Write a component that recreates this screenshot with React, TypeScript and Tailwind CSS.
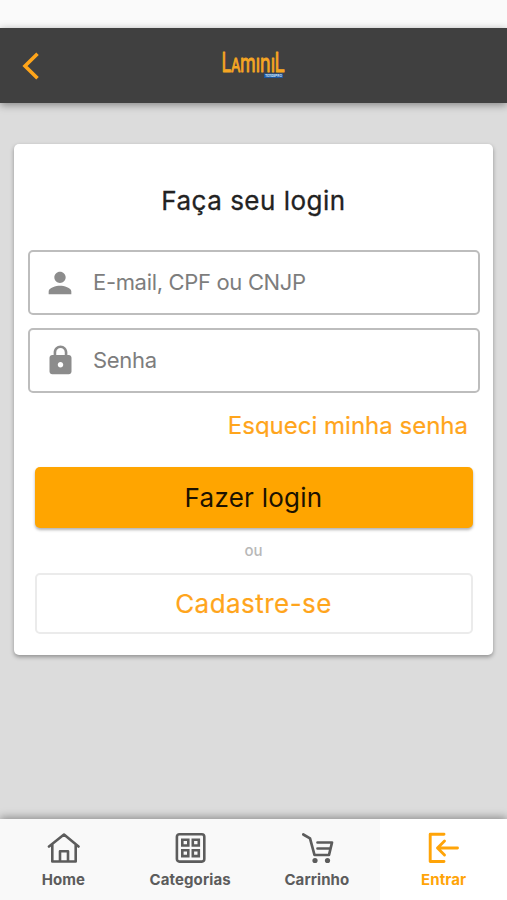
import React from "react";

function UserIcon() {
  return (
    <svg className="size-[34px] shrink-0" viewBox="0 0 24 24" fill="#8c8c8c">
      <path d="M12 12c2.21 0 4-1.79 4-4s-1.79-4-4-4-4 1.79-4 4 1.79 4 4 4zm0 2c-2.67 0-8 1.34-8 4v2h16v-2c0-2.66-5.33-4-8-4z" />
    </svg>
  );
}

function LockIcon() {
  return (
    <svg className="size-[33px] shrink-0" viewBox="0 0 24 24" fill="#8c8c8c">
      <path d="M18 8h-1V6c0-2.76-2.24-5-5-5S7 3.24 7 6v2H6c-1.1 0-2 .9-2 2v10c0 1.1.9 2 2 2h12c1.1 0 2-.9 2-2V10c0-1.1-.9-2-2-2zm-6 9c-1.1 0-2-.9-2-2s.9-2 2-2 2 .9 2 2-.9 2-2 2zM15.1 8H8.900V6c0-1.710 1.390-3.100 3.100-3.100s3.100 1.390 3.100 3.100v2z" />
    </svg>
  );
}

function Field({ icon, label }: { icon: React.ReactNode; label: string }) {
  return (
    <label className="flex h-[65px] items-center rounded-[5px] border-2 border-[#bdbdbd] bg-white pl-[13px]">
      <span className="flex w-[34px] justify-center">{icon}</span>
      <span className="mb-[2px] ml-[16px] text-[22px] leading-[28px] tracking-[-0.330px] text-[#7d7d7d]">{label}</span>
    </label>
  );
}

function Logo() {
  return (
    <svg className="h-[44px] w-[66px]" viewBox="-1 -6 66 44" fill="#f5a623" stroke="#f5a623" strokeWidth="0.900" strokeLinejoin="round" fontFamily="Inter, sans-serif" fontWeight="400">
      <text x="-0.500" y="21.500" fontSize="27.500" textLength="10" lengthAdjust="spacingAndGlyphs">L</text>
      <text x="9" y="21.500" fontSize="19" textLength="9.500" lengthAdjust="spacingAndGlyphs">A</text>
      <text x="18" y="21.500" fontSize="25" textLength="35" lengthAdjust="spacingAndGlyphs">mını</text>
      <text x="52.500" y="21.500" fontSize="27.500" textLength="10.500" lengthAdjust="spacingAndGlyphs">L</text>
      <rect x="42" y="23.500" width="19" height="4.500" fill="#1c559f" stroke="none" />
      <text x="43" y="27.200" fontSize="4" fontWeight="600" fill="#dce9fa" stroke="none" textLength="17" lengthAdjust="spacingAndGlyphs">TendaPRO</text>
    </svg>
  );
}

const stroke = { fill: "none", stroke: "currentColor", strokeLinecap: "round", strokeLinejoin: "round" } as const;

function HomeIcon() {
  return (
    <svg className="h-[32px] w-[34px]" viewBox="0 0 34 32" {...stroke} strokeWidth="2.600">
      <path d="M3 14.500 18 2.500 32.500 14.500M6.300 12.500V29.500H29.700V12.500M14 29V19.200H22V29" />
    </svg>
  );
}

function GridIcon() {
  return (
    <svg className="h-[32px] w-[34px]" viewBox="0 0 34 32" {...stroke} strokeWidth="2.600">
      <rect x="3.900" y="2.200" width="27.400" height="27.400" rx="2.500" />
      <path d="M9.300 7.800h6v5.700h-6zM19.800 7.800h6v5.700h-6zM9.300 18.200h6v5.900h-6zM19.800 18.200h6v5.900h-6z" strokeLinejoin="miter" />
    </svg>
  );
}

function CartIcon() {
  return (
    <svg className="h-[32px] w-[34px]" viewBox="0 0 34 32" {...stroke} strokeWidth="2.700">
      <path d="M3.300 2.500 10 6.300 14.500 23H29L32 10.500H17.500M17.500 16.500H29.500" />
      <circle cx="15" cy="28.500" r="2.600" fill="currentColor" stroke="none" />
      <circle cx="27.500" cy="28.500" r="2.600" fill="currentColor" stroke="none" />
    </svg>
  );
}

function EnterIcon() {
  return (
    <svg className="h-[32px] w-[34px]" viewBox="0 0 34 32" {...stroke} strokeWidth="2.900">
      <path d="M17 2.300H3.200V29.500H17M30.500 16H11M17.500 9 10.500 16 17.500 23" />
    </svg>
  );
}

function Tab({ label, icon, active = false }: { label: string; icon: React.ReactNode; active?: boolean }) {
  return (
    <button className={`flex flex-1 flex-col items-center pt-[13px] ${active ? "bg-white text-[#ffa408]" : "text-[#5c5c5c]"}`}>
      {icon}
      <span className="mt-[6px] text-[15px] leading-[20px] font-bold tracking-[0.1px]">{label}</span>
    </button>
  );
}

export default function App() {
  return (
    <div className="flex h-[900px] w-[507px] flex-col overflow-hidden bg-[#dcdcdc] font-['Inter',sans-serif]">
      <div className="h-[28px] shrink-0 bg-[#fafafa]" />
      <header className="grid h-[75px] shrink-0 grid-cols-3 items-center bg-[#404040] shadow-[0_2px_8px_rgba(0,0,0,0.4)]">
        <button className="pl-[21px]" aria-label="Voltar">
          <svg className="h-[30px] w-[20px]" viewBox="0 0 20 30" fill="none" stroke="#ffa51a" strokeWidth="3.600">
            <path d="M16.500 2.700 4 15 16.500 27.300" />
          </svg>
        </button>
        <div className="flex justify-center">
          <Logo />
        </div>
      </header>

      <main className="flex-1 px-[14px] pt-[41px]">
        <section className="flex h-[511px] flex-col rounded-[5px] bg-white px-[14px] shadow-[0_2px_4px_rgba(0,0,0,0.35)]">
          <h1 className="mt-[40px] text-center text-[26px] leading-[34px] tracking-[0.500px] text-[#222] [-webkit-text-stroke:0.300px_#222]">Faça seu login</h1>
          <div className="mt-[32px] mr-[-1px] flex flex-col gap-[13px]">
            <Field icon={<UserIcon />} label="E-mail, CPF ou CNJP" />
            <Field icon={<LockIcon />} label="Senha" />
          </div>
          <a className="mt-[17px] mr-[11px] h-[26.500px] self-end overflow-hidden text-[24px] leading-[32px] text-[#ffa51c] [-webkit-text-stroke:0.200px_#ffa51c]">Esqueci minha senha</a>
          <div className="mt-[30.500px] flex flex-col px-[6.500px]">
            <button className="h-[61px] rounded-[5px] bg-[#ffa500] text-[26px] tracking-[0.250px] text-[#1b1200] shadow-[0_2px_3px_rgba(0,0,0,0.3)]">Fazer login</button>
            <span className="my-[11px] text-center text-[15px] leading-[23px] font-medium text-[#b8b8b8]">ou</span>
            <button className="h-[61px] rounded-[5px] border-2 border-[#ebebeb] text-[26px] tracking-[0.450px] text-[#ffa51c] [-webkit-text-stroke:0.200px_#ffa51c]">Cadastre-se</button>
          </div>
        </section>
      </main>

      <nav className="flex h-[81px] shrink-0 bg-[#f9f9f9] shadow-[0_-2px_8px_rgba(0,0,0,0.35)]">
        <Tab label="Home" icon={<HomeIcon />} />
        <Tab label="Categorias" icon={<GridIcon />} />
        <Tab label="Carrinho" icon={<CartIcon />} />
        <Tab label="Entrar" icon={<EnterIcon />} active />
      </nav>
    </div>
  );
}
